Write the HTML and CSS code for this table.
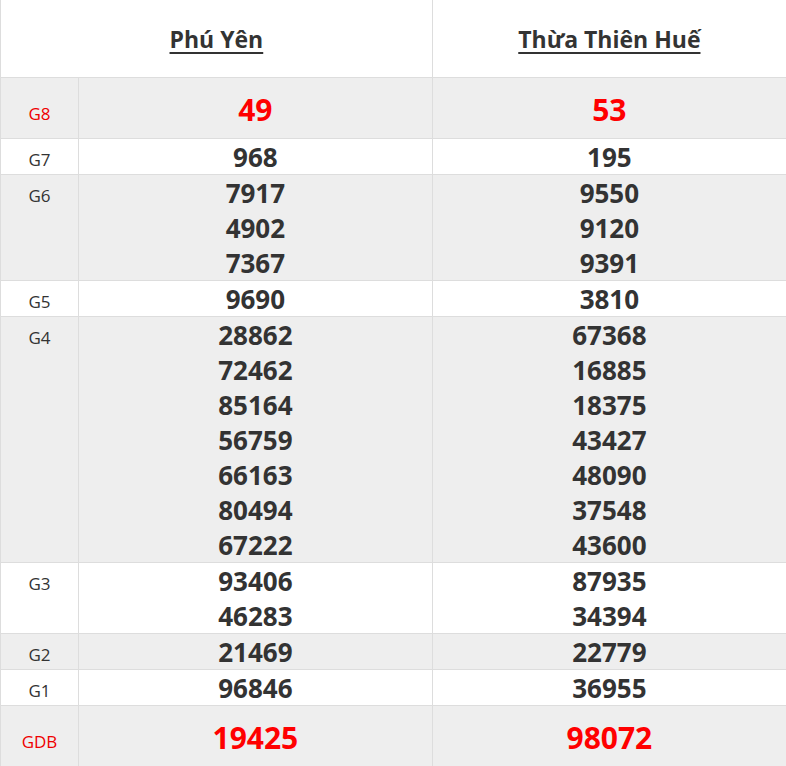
FILE: index.html
```html
<!DOCTYPE html>
<html lang="vi">
<head>
<meta charset="utf-8">
<title>Kết quả xổ số</title>
<link rel="stylesheet" href="styles.css">
</head>
<body>
<table class="kq">
  <colgroup>
    <col class="c-label">
    <col class="c-prov">
    <col class="c-prov">
  </colgroup>
  <thead>
    <tr>
      <th colspan="2" class="prov"><span class="prov-name">Phú Yên</span></th>
      <th class="prov last"><span class="prov-name">Thừa Thiên Huế</span></th>
    </tr>
  </thead>
  <tbody>
    <tr class="gray big">
      <td class="lbl red-lbl">G8</td>
      <td class="num red"><div>49</div></td>
      <td class="num red last"><div>53</div></td>
    </tr>
    <tr>
      <td class="lbl">G7</td>
      <td class="num"><div>968</div></td>
      <td class="num last"><div>195</div></td>
    </tr>
    <tr class="gray">
      <td class="lbl">G6</td>
      <td class="num"><div>7917</div><div>4902</div><div>7367</div></td>
      <td class="num last"><div>9550</div><div>9120</div><div>9391</div></td>
    </tr>
    <tr>
      <td class="lbl">G5</td>
      <td class="num"><div>9690</div></td>
      <td class="num last"><div>3810</div></td>
    </tr>
    <tr class="gray">
      <td class="lbl">G4</td>
      <td class="num"><div>28862</div><div>72462</div><div>85164</div><div>56759</div><div>66163</div><div>80494</div><div>67222</div></td>
      <td class="num last"><div>67368</div><div>16885</div><div>18375</div><div>43427</div><div>48090</div><div>37548</div><div>43600</div></td>
    </tr>
    <tr>
      <td class="lbl">G3</td>
      <td class="num"><div>93406</div><div>46283</div></td>
      <td class="num last"><div>87935</div><div>34394</div></td>
    </tr>
    <tr class="gray">
      <td class="lbl">G2</td>
      <td class="num"><div>21469</div></td>
      <td class="num last"><div>22779</div></td>
    </tr>
    <tr>
      <td class="lbl">G1</td>
      <td class="num"><div>96846</div></td>
      <td class="num last"><div>36955</div></td>
    </tr>
    <tr class="gray big">
      <td class="lbl red-lbl">GDB</td>
      <td class="num red"><div>19425</div></td>
      <td class="num red last"><div>98072</div></td>
    </tr>
  </tbody>
</table>
</body>
</html>
```
FILE: styles.css
```css
html, body {
  margin: 0;
  padding: 0;
  background: #fff;
}
body {
  font-family: "Open Sans", "Noto Sans", sans-serif;
  color: #333;
}
.kq {
  width: 100%;
  border-collapse: collapse;
  table-layout: fixed;
}
.c-label {
  width: 78px;
}
.kq th,
.kq td {
  border: 1px solid #ddd;
  padding: 0;
}
.kq .last {
  border-right: none;
}
.kq thead th {
  border-top: none;
}
.prov {
  height: 77px;
  padding-bottom: 10px;
  text-align: center;
  vertical-align: middle;
  font-weight: 700;
  font-size: 23px;
}
.prov-name {
  text-decoration: underline;
  text-decoration-thickness: 2px;
  text-underline-offset: 4px;
}
.gray td {
  background: #eee;
}
.kq td {
  vertical-align: baseline;
}
.lbl {
  text-align: center;
  font-size: 17px;
  color: #333;
}
.red-lbl {
  color: #e00;
}
.num {
  text-align: center;
  font-weight: 700;
  font-size: 26px;
  line-height: 35px;
}
.num div {
  position: relative;
  top: 1px;
}
.num.red {
  color: #f00;
  font-size: 30px;
  padding: 13px 0 12px;
}
```
